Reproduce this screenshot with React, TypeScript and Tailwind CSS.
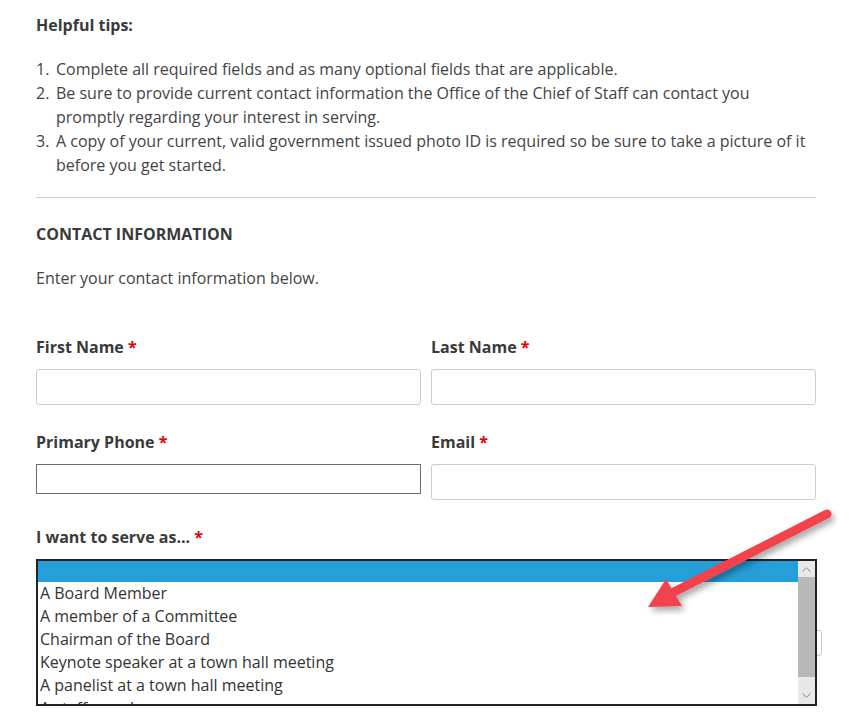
const options = [
  "A Board Member",
  "A member of a Committee",
  "Chairman of the Board",
  "Keynote speaker at a town hall meeting",
  "A panelist at a town hall meeting",
  "A staff member",
];

function Label({ text }: { text: string }) {
  return (
    <div className="h-[24px] leading-[24px] font-bold text-[#3a3a3a]">
      {text} <span className="text-[#e60000]">*</span>
    </div>
  );
}

export default function App() {
  return (
    <div
      className="relative w-[853px] h-[719px] overflow-hidden bg-white text-[16px] text-[#444]"
      style={{ fontFamily: '"Open Sans", "Noto Sans", sans-serif' }}
    >
      <div className="w-[780px] ml-[36px] pt-[13px]">
        <div className="h-[24px] leading-[24px] font-bold text-[#3a3a3a]">Helpful tips:</div>

        <ol className="mt-[20px] leading-[24px]">
          <li className="flex">
            <span className="w-[20px] shrink-0">1.</span>
            <span>Complete all required fields and as many optional fields that are applicable.</span>
          </li>
          <li className="flex">
            <span className="w-[20px] shrink-0">2.</span>
            <span>
              Be sure to provide current contact information the Office of the Chief of Staff can contact you
              promptly regarding your interest in serving.
            </span>
          </li>
          <li className="flex">
            <span className="w-[20px] shrink-0">3.</span>
            <span>
              A copy of your current, valid government issued photo ID is required so be sure to take a picture of it
              before you get started.
            </span>
          </li>
        </ol>

        <hr className="mt-[20px] border-0 border-t border-[#cccccc]" />

        <div className="mt-[24px] h-[24px] leading-[24px] font-bold text-[#3a3a3a]">CONTACT INFORMATION</div>
        <p className="mt-[20px] h-[24px] leading-[24px]">Enter your contact information below.</p>

        <div className="mt-[45px] grid grid-cols-2 gap-x-[10px]">
          <div>
            <Label text="First Name" />
            <input className="mt-[10px] block w-full h-[36px] border border-[#cccccc] rounded-[3px] bg-white" />
          </div>
          <div>
            <Label text="Last Name" />
            <input className="mt-[10px] block w-full h-[36px] border border-[#cccccc] rounded-[3px] bg-white" />
          </div>
        </div>

        <div className="mt-[25px] grid grid-cols-2 gap-x-[10px] items-start">
          <div>
            <Label text="Primary Phone" />
            <input className="mt-[10px] block w-full h-[30px] border border-[#6b6b6b] bg-white" />
          </div>
          <div>
            <Label text="Email" />
            <input className="mt-[10px] block w-full h-[36px] border border-[#cccccc] rounded-[3px] bg-white" />
          </div>
        </div>

        <div className="mt-[25px]">
          <Label text="I want to serve as..." />
          <div className="relative mt-[10px]">
            <div className="absolute right-[-6px] top-[71px] w-[10px] h-[26px] border border-[#c8c8c8] rounded-[3px] bg-white" />
            <div className="relative flex w-[781px] h-[147px] border-2 border-[#222] bg-white text-[#333]">
              <div className="flex-1 overflow-hidden">
                <div className="h-[21px] bg-[#249fda]" />
                {options.map((o) => (
                  <div key={o} className="h-[23px] leading-[23px] pl-[2px] whitespace-nowrap">
                    {o}
                  </div>
                ))}
              </div>
              <div className="w-[17px] flex flex-col bg-[#e8e8e8]">
                <div className="h-[16px] flex items-center justify-center">
                  <svg width="9" height="5" viewBox="0 0 9 5">
                    <path d="M0.5 4.5 L4.5 0.7 L8.5 4.5" fill="none" stroke="#8a8a8a" strokeWidth="1" />
                  </svg>
                </div>
                <div className="h-[100px] bg-[#b8b8b8]" />
                <div className="flex-1 flex items-end justify-center pb-[6px]">
                  <svg width="9" height="5" viewBox="0 0 9 5">
                    <path d="M0.5 0.5 L4.5 4.3 L8.5 0.5" fill="none" stroke="#8a8a8a" strokeWidth="1" />
                  </svg>
                </div>
              </div>
            </div>
          </div>
        </div>
      </div>

      <svg className="absolute inset-0 pointer-events-none" width="853" height="719" viewBox="0 0 853 719">
        <defs>
          <filter id="arrowShadow" x="-20%" y="-20%" width="140%" height="140%">
            <feDropShadow dx="3" dy="4" stdDeviation="3" floodColor="#000" floodOpacity="0.35" />
          </filter>
        </defs>
        <g filter="url(#arrowShadow)">
          <line x1="827" y1="514" x2="674" y2="592" stroke="#f2434b" strokeWidth="9" strokeLinecap="round" />
          <polygon points="648,607 666,579 682,606" fill="#f2434b" />
        </g>
      </svg>
    </div>
  );
}
